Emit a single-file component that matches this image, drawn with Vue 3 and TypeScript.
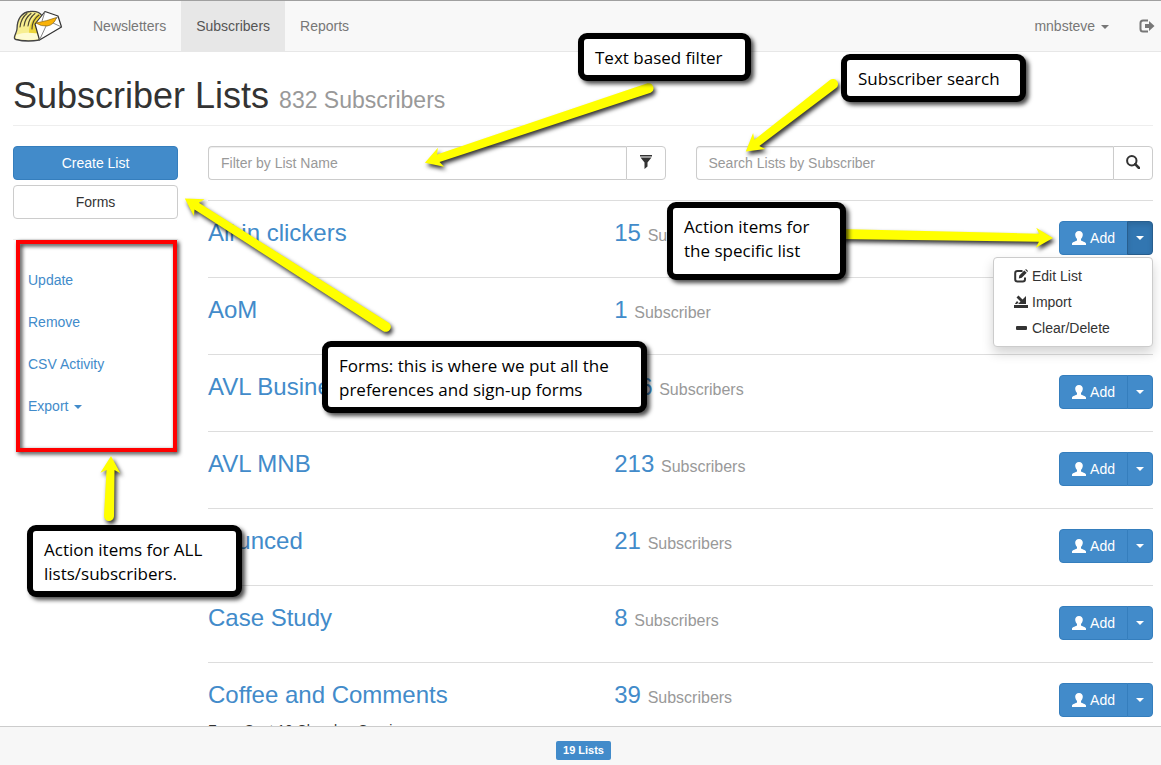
<script setup lang="ts">
import { ref } from 'vue'

interface SubscriberList {
  name: string
  count: string
  note?: string
}

interface Arrow {
  tip: [number, number]
  tail: [number, number]
}

const lists: SubscriberList[] = [
  { name: 'All in clickers', count: '15' },
  { name: 'AoM', count: '1' },
  { name: 'AVL Business', count: '116' },
  { name: 'AVL MNB', count: '213' },
  { name: 'Bounced', count: '21' },
  { name: 'Case Study', count: '8' },
  { name: 'Coffee and Comments', count: '39', note: 'From Sept 10 Chamber Session' },
]

const filterText = ref('')
const searchText = ref('')
const openMenu = ref(0)

const arrows: Arrow[] = [
  { tip: [424, 163], tail: [649, 88] },
  { tip: [745, 152], tail: [833, 84] },
  { tip: [1054, 238], tail: [838, 234] },
  { tip: [184, 198], tail: [386, 327] },
  { tip: [111, 455], tail: [109, 516] },
]

// Tapered shaft with a round tail and a notched head, pointing at `tip`.
function arrowPath({ tip, tail }: Arrow): string {
  const dx = tail[0] - tip[0]
  const dy = tail[1] - tip[1]
  const len = Math.hypot(dx, dy)
  const at = (along: number, side: number): string => {
    const x = tip[0] + (dx * along - dy * side) / len
    const y = tip[1] + (dy * along + dx * side) / len
    return `${x.toFixed(1)} ${y.toFixed(1)}`
  }
  return [
    `M${at(1, 0)}`,
    `L${at(18, 10)}`,
    `L${at(15, 4)}`,
    `L${at(len, 5)}`,
    `A5 5 0 0 0 ${at(len, -5)}`,
    `L${at(15, -4)}`,
    `L${at(18, -10)}Z`,
  ].join('')
}

function toggle(index: number): void {
  openMenu.value = openMenu.value === index ? -1 : index
}
</script>

<template>
  <div class="page">
    <header class="navbar">
      <a class="brand" href="#" aria-label="Home">
        <svg width="50" height="34" viewBox="0 0 50 34">
          <path d="M1.500 28C2 25 3.500 24 4 20C4 10 9 3 17 2.500C22 2 27 3 29 7L26 31C18 32.500 9 32 3 30.500Q1 30 1.500 28Z" fill="#f7ee90" stroke="#444" stroke-width="1.300" stroke-linejoin="round" />
          <path d="M16 24C16 16 20 8 25 5L29 8L22 16L25 24Z" fill="#ecd53c" />
          <path d="M3 26Q13 22 24 25L26 30Q12 32 3 29.500Z" fill="#fefbd2" />
          <path d="M7 18Q8 9 14 4.500M11 17Q12 9 18 4.500M15 17Q16 9 22 4.500M19 20Q19 11 26 6" fill="none" stroke="#4a4632" stroke-width="1.100" stroke-linecap="round" />
          <path d="M22 15L32 2.500L45 7L48.500 18L26.500 31Z" fill="#fff" stroke="#333" stroke-width="1.200" stroke-linejoin="round" />
          <path d="M23 14Q34 12 43.500 8.500Q41 16 34 17Q28 17.500 23 14Z" fill="#f9b208" stroke="#8a6200" stroke-width="0.700" />
          <path d="M26.500 31L33 17M40 14L48.500 18M45 7L43 10M29 12L32 2.500" fill="none" stroke="#777" stroke-width="0.900" />
        </svg>
      </a>
      <nav class="nav-main">
        <a href="#">Newsletters</a>
        <a href="#" class="active">Subscribers</a>
        <a href="#">Reports</a>
      </nav>
      <nav class="nav-user">
        <a href="#">mnbsteve <span class="caret"></span></a>
        <a href="#" class="logout" aria-label="Log out">
          <svg width="16" height="14" viewBox="0 0 16 14">
            <path d="M9 1.500H4Q1.500 1.500 1.500 4V10Q1.500 12.500 4 12.500H9" fill="none" stroke="#777" stroke-width="2" />
            <path d="M6 5H10V2L15.500 7L10 12V9H6Z" fill="#777" />
          </svg>
        </a>
      </nav>
    </header>

    <main class="content">
      <h1>Subscriber Lists <small>832 Subscribers</small></h1>

      <div class="columns">
        <aside class="sidebar">
          <button type="button" class="btn primary">Create List</button>
          <button type="button" class="btn">Forms</button>
          <nav class="side-nav">
            <a href="#">Update</a>
            <a href="#">Remove</a>
            <a href="#">CSV Activity</a>
            <a href="#">Export <span class="caret"></span></a>
          </nav>
        </aside>

        <section class="lists">
          <div class="searches">
            <form class="input-group" @submit.prevent>
              <input v-model="filterText" type="text" placeholder="Filter by List Name" aria-label="Filter by List Name" />
              <button type="submit" aria-label="Filter">
                <svg width="14" height="14" viewBox="0 0 14 14">
                  <path d="M1 0H13V1.500H1ZM1.500 2.500H12.500L8.500 7.500V11.500L5.500 14V7.500Z" fill="#333" />
                </svg>
              </button>
            </form>
            <form class="input-group" @submit.prevent>
              <input v-model="searchText" type="text" placeholder="Search Lists by Subscriber" aria-label="Search Lists by Subscriber" />
              <button type="submit" aria-label="Search">
                <svg width="14" height="14" viewBox="0 0 14 14">
                  <circle cx="5.800" cy="5.800" r="4.700" fill="none" stroke="#333" stroke-width="2" />
                  <path d="M9.200 9.200L13 13" stroke="#333" stroke-width="2.600" stroke-linecap="round" />
                </svg>
              </button>
            </form>
          </div>

          <article v-for="(list, i) in lists" :key="list.name" class="list-row">
            <div class="list-name">
              <h3><a href="#">{{ list.name }}</a></h3>
              <p v-if="list.note">{{ list.note }}</p>
            </div>
            <h3 class="list-count"><a href="#">{{ list.count }}</a> <small>{{ list.count === '1' ? 'Subscriber' : 'Subscribers' }}</small></h3>
            <div class="list-actions">
              <button type="button" class="add">
                <svg width="14" height="14" viewBox="0 0 14 14">
                  <path d="M7 0C9.500 0 11 1.700 10.800 4C10.600 6 9.600 7.200 9 8V9.200C9.500 10.300 13.800 10.700 14 12.500V14H0V12.500C.2 10.700 4.500 10.300 5 9.200V8C4.400 7.200 3.400 6 3.200 4C3 1.700 4.500 0 7 0Z" fill="#fff" />
                </svg>
                Add
              </button>
              <button type="button" class="toggle" :class="{ open: openMenu === i }" aria-label="More actions" @click="toggle(i)">
                <span class="caret"></span>
              </button>
              <div v-if="openMenu === i" class="menu">
                <a href="#">
                  <svg width="14" height="14" viewBox="0 0 14 14">
                    <path d="M8.500 2H3.500Q1.200 2 1.200 4.300V10.200Q1.200 12.500 3.500 12.500H8.700Q11 12.500 11 10.200V8.500" fill="none" stroke="#333" stroke-width="2" />
                    <path d="M4.800 9.500L5.300 6.500L10.300 1.500L12.700 3.700L7.800 8.800ZM11.200.8L12 0L14 2L13.300 2.900Z" fill="#333" />
                  </svg>
                  Edit List
                </a>
                <a href="#">
                  <svg width="14" height="14" viewBox="0 0 14 14">
                    <path d="M0 10H14V13H0ZM12 1V9H4L6.500 6.500L2.500 2.500L4.500 .5L8.500 4.500ZM1.500 8L3 6L4.500 7.500L3 9H1Z" fill="#333" />
                  </svg>
                  Import
                </a>
                <a href="#">
                  <svg width="14" height="14" viewBox="0 0 14 14">
                    <rect x="2" y="5" width="11" height="4" rx="1" fill="#333" />
                  </svg>
                  Clear/Delete
                </a>
              </div>
            </div>
          </article>
        </section>
      </div>
    </main>

    <footer class="footer"><span class="label">19 Lists</span></footer>

    <div class="notes">
      <div class="highlight"></div>
      <svg class="arrows" width="1161" height="765" viewBox="0 0 1161 765">
        <path v-for="(arrow, i) in arrows" :key="i" :d="arrowPath(arrow)" />
      </svg>
      <p class="note note-filter">Text based filter</p>
      <p class="note note-search">Subscriber search</p>
      <p class="note note-row">Action items for<br />the specific list</p>
      <p class="note note-forms">Forms: this is where we put all the<br />preferences and sign-up forms</p>
      <p class="note note-all">Action items for ALL<br />lists/subscribers.</p>
    </div>
  </div>
</template>

<style>
body {
  margin: 0;
  background: #fff;
}
</style>

<style scoped>
* {
  box-sizing: border-box;
}
.page {
  position: relative;
  display: flex;
  flex-direction: column;
  height: 100vh;
  overflow: hidden;
  font-family: "Liberation Sans", Arial, sans-serif;
  font-size: 14px;
  line-height: 20px;
  color: #333;
}
a {
  color: #428bca;
  text-decoration: none;
}
button,
input {
  font: inherit;
}
button {
  cursor: pointer;
}
.caret {
  display: inline-block;
  margin-left: 2px;
  vertical-align: middle;
  border-top: 4px solid currentColor;
  border-left: 4px solid transparent;
  border-right: 4px solid transparent;
}

.navbar {
  flex: none;
  display: flex;
  align-items: stretch;
  height: 52px;
  border-top: 1px solid #a0a0a0;
  border-bottom: 1px solid #e7e7e7;
  background: #f8f8f8;
}
.brand {
  display: flex;
  align-items: center;
  width: 78px;
  padding-left: 13px;
}
.nav-main,
.nav-user {
  display: flex;
}
.nav-main a,
.nav-user a {
  padding: 15px;
  color: #777;
}
.nav-main .active {
  background: #e7e7e7;
  color: #555;
}
.nav-user {
  margin-left: auto;
}
.nav-user .logout {
  display: flex;
  align-items: center;
  padding-right: 6px;
}

.content {
  flex: 1;
  min-height: 0;
  overflow: hidden;
  padding: 24px 8px 0 13px;
}
h1,
h3,
p {
  margin: 0;
  font-weight: 400;
}
h1 {
  margin-bottom: 20px;
  padding-bottom: 9px;
  border-bottom: 1px solid #eee;
  font-size: 36px;
  line-height: 40px;
}
small {
  color: #999;
  line-height: 1;
}
h1 small {
  font-size: 23px;
}
.columns {
  display: grid;
  grid-template-columns: repeat(12, 1fr);
  gap: 30px;
}
.sidebar {
  grid-column: span 2;
  display: flex;
  flex-direction: column;
  gap: 5px;
}
.btn {
  height: 34px;
  border: 1px solid #ccc;
  border-radius: 4px;
  background: #fff;
  color: #333;
}
.btn.primary {
  border-color: #357ebd;
  background: #428bca;
  color: #fff;
}
.side-nav {
  display: flex;
  flex-direction: column;
  gap: 2px;
  margin-top: 15px;
  padding-top: 20px;
  border-top: 1px solid #eee;
}
.side-nav a {
  padding: 10px 15px;
}

.lists {
  grid-column: span 10;
}
.searches {
  display: grid;
  grid-template-columns: 1fr 1fr;
  gap: 30px;
  margin-bottom: 20px;
}
.input-group {
  display: flex;
  height: 34px;
}
.input-group input {
  flex: 1;
  min-width: 0;
  padding: 6px 12px;
  border: 1px solid #ccc;
  border-right: 0;
  border-radius: 4px 0 0 4px;
  box-shadow: inset 0 1px 1px rgba(0, 0, 0, 0.075);
}
.input-group input::placeholder {
  color: #999;
  opacity: 1;
}
.input-group button {
  display: flex;
  align-items: center;
  justify-content: center;
  width: 40px;
  padding: 0 0 2px;
  border: 1px solid #ccc;
  border-radius: 0 4px 4px 0;
  background: #fff;
}

.list-row {
  display: grid;
  grid-template-columns: repeat(12, 1fr);
  column-gap: 30px;
  min-height: 77px;
  padding: 19px 0;
  border-top: 1px solid #ddd;
}
.list-name {
  grid-column: span 5;
}
.list-name p {
  margin-top: 12px;
}
h3 {
  font-size: 24px;
  line-height: 26px;
}
.list-count {
  grid-column: span 5;
}
.list-count small {
  font-size: 16px;
}
.list-actions {
  position: relative;
  grid-column: span 2;
  display: flex;
  justify-content: flex-end;
  height: 34px;
  margin-top: 1px;
}
.list-actions button {
  display: flex;
  align-items: center;
  border: 1px solid #357ebd;
  background: #428bca;
  color: #fff;
}
.list-actions .add {
  gap: 4px;
  padding: 0 12px;
  border-radius: 4px 0 0 4px;
}
.list-actions .toggle {
  justify-content: center;
  width: 26px;
  margin-left: -1px;
  padding: 0;
  border-radius: 0 4px 4px 0;
}
.toggle .caret {
  margin: 0;
}
.list-actions .toggle.open {
  border-color: #285e8e;
  background: #3276b1;
  box-shadow: inset 0 3px 5px rgba(0, 0, 0, 0.125);
}
.menu {
  position: absolute;
  top: 36px;
  right: 0;
  z-index: 2;
  width: 160px;
  padding: 5px 0;
  border: 1px solid #ccc;
  border-radius: 4px;
  background: #fff;
  box-shadow: 0 6px 12px rgba(0, 0, 0, 0.175);
}
.menu a {
  display: flex;
  align-items: center;
  gap: 4px;
  padding: 3px 20px;
  color: #333;
}

.footer {
  flex: none;
  display: flex;
  justify-content: center;
  align-items: center;
  height: 39px;
  padding: 8px 0 0 6px;
  border-top: 1px solid #ccc;
  background: #f7f7f7;
}
.label {
  padding: 0 7px;
  border-radius: 2px;
  background: #428bca;
  color: #fff;
  font-size: 11px;
  font-weight: 700;
  line-height: 19px;
}

.notes {
  position: absolute;
  top: 0;
  left: 0;
  z-index: 3;
  pointer-events: none;
}
.arrows {
  position: absolute;
  top: 0;
  left: 0;
  fill: #ff0;
  filter: drop-shadow(2px 3px 2px rgba(0, 0, 0, 0.8));
}
.highlight {
  position: absolute;
  top: 240px;
  left: 16px;
  width: 161px;
  height: 212px;
  border: 4px solid #f00;
  filter: drop-shadow(2px 2px 2px rgba(0, 0, 0, 0.8));
}
.note {
  position: absolute;
  padding: 7px 11px 5px;
  border: 6px solid #000;
  border-radius: 9px;
  background: #fff;
  box-shadow: 3px 3px 4px rgba(0, 0, 0, 0.7);
  color: #000;
  font-family: "Open Sans", "Noto Sans", sans-serif;
  font-size: 17px;
  line-height: 24px;
  white-space: nowrap;
}
.note-filter {
  top: 33px;
  left: 578px;
  width: 173px;
}
.note-search {
  top: 54px;
  left: 841px;
  width: 185px;
}
.note-row {
  top: 202px;
  left: 667px;
  width: 179px;
  height: 78px;
}
.note-forms {
  top: 341px;
  left: 322px;
  width: 325px;
}
.note-all {
  top: 525px;
  left: 27px;
  width: 215px;
}
</style>
